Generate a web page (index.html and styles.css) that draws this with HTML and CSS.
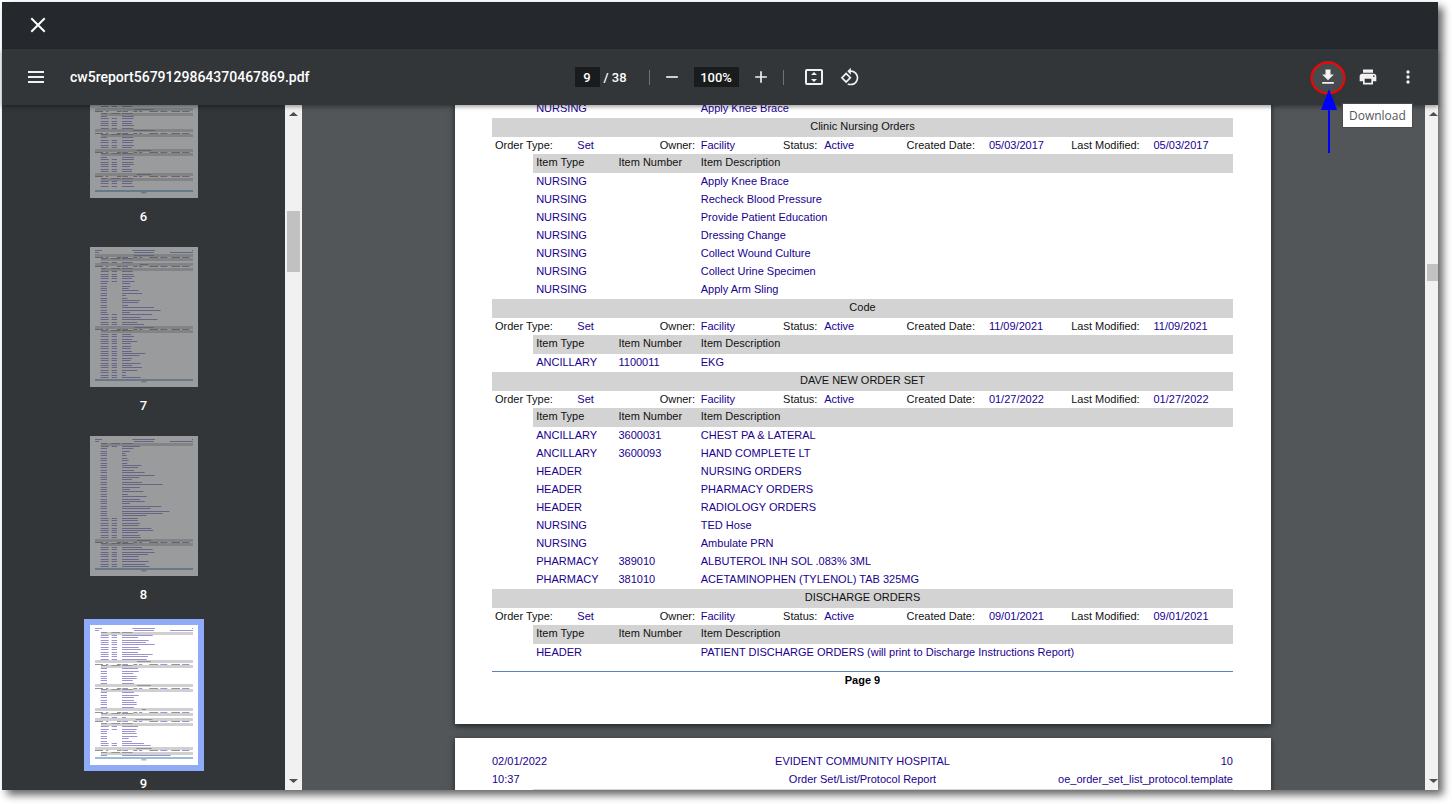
FILE: index.html
```html
<!DOCTYPE html>
<html lang="en">
<head>
    <meta charset="UTF-8">
    <meta name="viewport" content="width=device-width, initial-scale=1.0">
    <title>cw5report5679129864370467869.pdf</title>
    <link rel="stylesheet" href="styles.css">
</head>
<body>
    <div class="window">
        <header class="titlebar">
            <button class="icon-btn" aria-label="Close">
                <svg width="20" height="20" viewBox="0 0 20 20"><path d="M4 4l12 12M16 4L4 16" fill="none" stroke="#fff" stroke-width="2" stroke-linecap="square"/></svg>
            </button>
        </header>

        <div class="toolbar">
            <div class="toolbar-start">
                <button class="icon-btn menu-btn" aria-label="Menu">
                    <svg width="20" height="20" viewBox="0 0 20 20"><path d="M2 4h16v2H2zM2 9h16v2H2zM2 14h16v2H2z"/></svg>
                </button>
                <h1 class="filename">cw5report5679129864370467869.pdf</h1>
            </div>

            <div class="toolbar-center">
                <input class="field page-field" type="text" value="9" aria-label="Page number">
                <span class="page-total">/ 38</span>
                <span class="divider divider-first"></span>
                <button class="icon-btn" aria-label="Zoom out">
                    <svg width="20" height="20" viewBox="0 0 24 24"><path d="M5 11h14v2H5z"/></svg>
                </button>
                <input class="field zoom-field" type="text" value="100%" aria-label="Zoom level">
                <button class="icon-btn" aria-label="Zoom in">
                    <svg width="20" height="20" viewBox="0 0 24 24"><path d="M19 13h-6v6h-2v-6H5v-2h6V5h2v6h6v2z"/></svg>
                </button>
                <span class="divider divider-second"></span>
                <button class="icon-btn fit-btn" aria-label="Fit to page">
                    <svg width="20" height="20" viewBox="0 0 20 20"><rect x="2" y="3" width="16" height="14" rx="1" fill="none" stroke="#f1f1f1" stroke-width="2"/><path d="M10 5l3 3H7zM10 15l3-3H7z"/></svg>
                </button>
                <button class="icon-btn" aria-label="Rotate counterclockwise">
                    <svg width="20" height="20" viewBox="0 0 24 24"><path d="M7.34 6.41L.86 12.9l6.49 6.48 6.49-6.48-6.5-6.49zM3.69 12.9l3.66-3.66L11 12.9l-3.66 3.66-3.65-3.66zm15.67-6.26C17.61 4.88 15.3 4 13 4V.76L8.76 5 13 9.24V6c1.79 0 3.58.68 4.95 2.05 2.73 2.73 2.73 7.17 0 9.9C16.58 19.32 14.79 20 13 20c-.97 0-1.94-.21-2.84-.61l-1.49 1.49C10.02 21.62 11.51 22 13 22c2.3 0 4.61-.88 6.36-2.64 3.52-3.51 3.52-9.21 0-12.72z"/></svg>
                </button>
            </div>

            <div class="toolbar-end">
                <div class="download">
                    <button class="icon-btn hovered" aria-label="Download">
                        <svg width="20" height="20" viewBox="0 0 24 24"><path d="M19 9h-4V3H9v6H5l7 7 7-7zM5 18v2h14v-2H5z"/></svg>
                    </button>
                    <!-- red ring and blue arrow -->
                    <svg class="callout" width="36" height="94" viewBox="0 0 36 94">
                        <ellipse cx="18" cy="17" rx="16.5" ry="15.5" fill="none" stroke="#f00" stroke-width="2"/>
                        <path d="M19 28l8 21H11zM18 48h2v44h-2z" fill="#00f"/>
                    </svg>
                    <span class="tooltip">Download</span>
                </div>
                <button class="icon-btn" aria-label="Print">
                    <svg width="20" height="20" viewBox="0 0 24 24"><path d="M19 8H5c-1.66 0-3 1.34-3 3v6h4v4h12v-4h4v-6c0-1.66-1.34-3-3-3zm-3 11H8v-5h8v5zm3-7c-.55 0-1-.45-1-1s.45-1 1-1 1 .45 1 1-.45 1-1 1zm-1-9H6v4h12V3z"/></svg>
                </button>
                <button class="icon-btn" aria-label="More actions">
                    <svg width="20" height="20" viewBox="0 0 24 24"><circle cx="12" cy="6" r="2"/><circle cx="12" cy="12" r="2"/><circle cx="12" cy="18" r="2"/></svg>
                </button>
            </div>
        </div>

        <div class="content">
            <nav class="sidebar">
                <ol class="thumbs" id="thumbs"></ol>
            </nav>
            <div class="scrollbar">
                <svg class="arrow" width="17" height="17" viewBox="0 0 17 17"><path d="M4 11h9L8.500 7z"/></svg>
                <div class="scroll-thumb side-thumb"></div>
                <svg class="arrow arrow-down" width="17" height="17" viewBox="0 0 17 17"><path d="M4 6h9l-4.500 4z"/></svg>
            </div>

            <main class="viewer">
                <section class="page page-scrolled">
                    <table class="report">
                        <colgroup><col span="18"></colgroup>
                        <tbody>
                            <tr><td></td><td colspan="4">NURSING</td><td colspan="13">Apply Knee Brace</td></tr>
                        </tbody>
                        <tbody>
                            <tr class="set-title"><th colspan="18">Clinic Nursing Orders</th></tr>
                            <tr class="set-info"><th colspan="2">Order Type:</th><td colspan="2">Set</td><th>Owner:</th><td colspan="2">Facility</td><th>Status:</th><td colspan="2">Active</td><th colspan="2">Created Date:</th><td colspan="2">05/03/2017</td><th colspan="2">Last Modified:</th><td colspan="2">05/03/2017</td></tr>
                            <tr class="item-head"><td></td><th colspan="2">Item Type</th><th colspan="2">Item Number</th><th colspan="13">Item Description</th></tr>
                            <tr><td></td><td colspan="2">NURSING</td><td colspan="2"></td><td colspan="13">Apply Knee Brace</td></tr>
                            <tr><td></td><td colspan="2">NURSING</td><td colspan="2"></td><td colspan="13">Recheck Blood Pressure</td></tr>
                            <tr><td></td><td colspan="2">NURSING</td><td colspan="2"></td><td colspan="13">Provide Patient Education</td></tr>
                            <tr><td></td><td colspan="2">NURSING</td><td colspan="2"></td><td colspan="13">Dressing Change</td></tr>
                            <tr><td></td><td colspan="2">NURSING</td><td colspan="2"></td><td colspan="13">Collect Wound Culture</td></tr>
                            <tr><td></td><td colspan="2">NURSING</td><td colspan="2"></td><td colspan="13">Collect Urine Specimen</td></tr>
                            <tr><td></td><td colspan="2">NURSING</td><td colspan="2"></td><td colspan="13">Apply Arm Sling</td></tr>
                        </tbody>
                        <tbody>
                            <tr class="set-title"><th colspan="18">Code</th></tr>
                            <tr class="set-info"><th colspan="2">Order Type:</th><td colspan="2">Set</td><th>Owner:</th><td colspan="2">Facility</td><th>Status:</th><td colspan="2">Active</td><th colspan="2">Created Date:</th><td colspan="2">11/09/2021</td><th colspan="2">Last Modified:</th><td colspan="2">11/09/2021</td></tr>
                            <tr class="item-head"><td></td><th colspan="2">Item Type</th><th colspan="2">Item Number</th><th colspan="13">Item Description</th></tr>
                            <tr><td></td><td colspan="2">ANCILLARY</td><td colspan="2">1100011</td><td colspan="13">EKG</td></tr>
                        </tbody>
                        <tbody>
                            <tr class="set-title"><th colspan="18">DAVE NEW ORDER SET</th></tr>
                            <tr class="set-info"><th colspan="2">Order Type:</th><td colspan="2">Set</td><th>Owner:</th><td colspan="2">Facility</td><th>Status:</th><td colspan="2">Active</td><th colspan="2">Created Date:</th><td colspan="2">01/27/2022</td><th colspan="2">Last Modified:</th><td colspan="2">01/27/2022</td></tr>
                            <tr class="item-head"><td></td><th colspan="2">Item Type</th><th colspan="2">Item Number</th><th colspan="13">Item Description</th></tr>
                            <tr><td></td><td colspan="2">ANCILLARY</td><td colspan="2">3600031</td><td colspan="13">CHEST PA &amp; LATERAL</td></tr>
                            <tr><td></td><td colspan="2">ANCILLARY</td><td colspan="2">3600093</td><td colspan="13">HAND COMPLETE LT</td></tr>
                            <tr><td></td><td colspan="2">HEADER</td><td colspan="2"></td><td colspan="13">NURSING ORDERS</td></tr>
                            <tr><td></td><td colspan="2">HEADER</td><td colspan="2"></td><td colspan="13">PHARMACY ORDERS</td></tr>
                            <tr><td></td><td colspan="2">HEADER</td><td colspan="2"></td><td colspan="13">RADIOLOGY ORDERS</td></tr>
                            <tr><td></td><td colspan="2">NURSING</td><td colspan="2"></td><td colspan="13">TED Hose</td></tr>
                            <tr><td></td><td colspan="2">NURSING</td><td colspan="2"></td><td colspan="13">Ambulate PRN</td></tr>
                            <tr><td></td><td colspan="2">PHARMACY</td><td colspan="2">389010</td><td colspan="13">ALBUTEROL INH SOL .083% 3ML</td></tr>
                            <tr><td></td><td colspan="2">PHARMACY</td><td colspan="2">381010</td><td colspan="13">ACETAMINOPHEN (TYLENOL) TAB 325MG</td></tr>
                        </tbody>
                        <tbody>
                            <tr class="set-title"><th colspan="18">DISCHARGE ORDERS</th></tr>
                            <tr class="set-info"><th colspan="2">Order Type:</th><td colspan="2">Set</td><th>Owner:</th><td colspan="2">Facility</td><th>Status:</th><td colspan="2">Active</td><th colspan="2">Created Date:</th><td colspan="2">09/01/2021</td><th colspan="2">Last Modified:</th><td colspan="2">09/01/2021</td></tr>
                            <tr class="item-head"><td></td><th colspan="2">Item Type</th><th colspan="2">Item Number</th><th colspan="13">Item Description</th></tr>
                            <tr><td></td><td colspan="2">HEADER</td><td colspan="2"></td><td colspan="13">PATIENT DISCHARGE ORDERS (will print to Discharge Instructions Report)</td></tr>
                        </tbody>
                    </table>
                    <footer class="page-footer">Page 9</footer>
                </section>

                <section class="page page-next">
                    <header class="page-header">
                        <span>02/01/2022</span>
                        <span class="mid">EVIDENT COMMUNITY HOSPITAL</span>
                        <span class="end">10</span>
                        <span>10:37</span>
                        <span class="mid">Order Set/List/Protocol Report</span>
                        <span class="end">oe_order_set_list_protocol.template</span>
                    </header>
                    <table class="report">
                        <colgroup><col span="18"></colgroup>
                        <tbody>
                            <tr class="item-head"><td></td><th colspan="17"></th></tr>
                        </tbody>
                    </table>
                </section>
            </main>
            <div class="scrollbar viewer-scrollbar">
                <svg class="arrow" width="17" height="17" viewBox="0 0 17 17"><path d="M4 11h9L8.500 7z"/></svg>
                <div class="scroll-thumb main-thumb"></div>
                <svg class="arrow arrow-down" width="17" height="17" viewBox="0 0 17 17"><path d="M4 6h9l-4.500 4z"/></svg>
            </div>
        </div>
    </div>

    <script src="thumbs.js"></script>
</body>
</html>
```

FILE: styles.css
```css
* {
    box-sizing: border-box;
}

body {
    margin: 0;
    height: 100vh;
    padding: 2px 14px 14px 2px;
    background: #fff;
    font-family: Roboto, Arial, sans-serif;
    overflow: hidden;
}

.window {
    display: flex;
    flex-direction: column;
    height: 100%;
    background: #525659;
    box-shadow: 5px 5px 8px rgba(0, 0, 0, 0.6);
}

/* top bars */
.titlebar {
    display: flex;
    align-items: center;
    flex: 0 0 47px;
    padding: 0 20px 2px;
    background: #25282c;
}

.toolbar {
    display: flex;
    align-items: center;
    flex: 0 0 56px;
    padding: 0 14px;
    background: #323639;
    color: #fff;
    box-shadow: 0 2px 4px rgba(0, 0, 0, 0.35);
    position: relative;
    z-index: 2;
}

.toolbar-start,
.toolbar-end {
    display: flex;
    align-items: center;
    flex: 1 1 0;
}

.toolbar-end {
    justify-content: flex-end;
    gap: 8px;
}

.toolbar-center {
    display: flex;
    align-items: center;
}

.icon-btn {
    display: flex;
    align-items: center;
    justify-content: center;
    width: 32px;
    height: 32px;
    padding: 0;
    border: none;
    border-radius: 50%;
    background: none;
    cursor: pointer;
}

.icon-btn svg {
    fill: #f1f1f1;
}

.hovered {
    background: #474b4d;
}

.menu-btn {
    margin-left: 4px;
}

.fit-btn {
    margin-right: 4px;
}

.filename {
    margin: 0 0 0 18px;
    font-size: 14px;
    font-weight: 500;
    line-height: 20px;
}

.field {
    height: 20px;
    padding: 0;
    border: none;
    background: #191b1c;
    color: #fff;
    font-family: inherit;
    font-size: 13px;
    font-weight: 500;
    text-align: center;
}

.page-field {
    width: 25px;
}

.zoom-field {
    width: 45px;
    margin: 0 6px;
}

.page-total {
    width: 25px;
    margin-left: 4px;
    font-size: 13px;
    font-weight: 500;
    white-space: nowrap;
}

.divider {
    width: 1px;
    height: 15px;
    background: #6f7274;
}

.divider-first {
    margin: 0 6px 0 20px;
}

.divider-second {
    margin: 0 14px 0 6px;
}

.download {
    position: relative;
}

.callout {
    position: absolute;
    left: -2px;
    top: 0;
    pointer-events: none;
}

.tooltip {
    position: absolute;
    left: 30px;
    top: 42px;
    padding: 0 6px;
    border: 1px solid #4a4a4a;
    background: #fff;
    color: #575757;
    font-family: "Open Sans", "Noto Sans", sans-serif;
    font-size: 12px;
    line-height: 23px;
}

/* thumbnails */
.content {
    display: flex;
    flex: 1;
    min-height: 0;
    overflow: hidden;
}

.sidebar {
    flex: 0 0 283px;
    background: #323639;
    overflow: hidden;
}

.thumbs {
    display: flex;
    flex-direction: column;
    align-items: center;
    margin: -47px 0 0;
    padding: 0;
    list-style: none;
}

.thumbs li {
    display: flex;
    flex-direction: column;
    align-items: center;
    height: 189px;
    color: #fff;
    font-size: 13px;
    font-weight: 500;
    line-height: 37px;
}

.thumb {
    display: block;
    padding: 0;
    border: none;
    background: #fff;
    opacity: 0.5;
}

.thumb svg {
    display: block;
    width: 108px;
    height: 140px;
}

.thumb.selected {
    opacity: 1;
    box-shadow: 0 0 0 6px #8fabf7;
}

/* scrollbars */
.scrollbar {
    display: flex;
    flex-direction: column;
    flex: 0 0 17px;
    background: #f1f1f1;
}

.viewer-scrollbar {
    margin-right: -4px;
}

.arrow {
    fill: #505050;
}

.arrow-down {
    margin-top: auto;
}

.scroll-thumb {
    margin: 0 2px;
    background: #c1c1c1;
}

.side-thumb {
    margin-top: 89px;
    height: 61px;
}

.main-thumb {
    margin-top: 142px;
    height: 17px;
}

/* document */
.viewer {
    flex: 1;
    min-width: 0;
    padding-right: 1px;
    overflow: hidden;
}

.page {
    width: 816px;
    margin: 0 auto 14px;
    padding: 0 38px 0 37px;
    background: #fff;
    color: #200090;
    font-family: "Liberation Sans", Arial, sans-serif;
    font-size: 11px;
    line-height: 16px;
    box-shadow: 0 2px 6px rgba(0, 0, 0, 0.6);
}

.page-scrolled {
    margin-top: -5px;
    padding-bottom: 36px;
}

.page-next {
    padding-top: 14px;
}

.report {
    width: 100%;
    table-layout: fixed;
    border-collapse: collapse;
}

.report tr {
    height: 18px;
}

.report td,
.report th {
    padding: 0 0 0 3px;
    font-weight: normal;
    text-align: left;
    vertical-align: top;
    white-space: nowrap;
}

.report th {
    color: #111;
}

.report .set-title,
.report .item-head {
    height: 19px;
}

.report .set-info {
    height: 17px;
}

.report .set-title th {
    padding: 0;
    background: #d3d3d3;
    text-align: center;
}

.item-head th {
    background: #d3d3d3;
}

.page-footer {
    margin-top: 9px;
    border-top: 1px solid #5b83bd;
    color: #000;
    font-weight: bold;
    text-align: center;
}

.page-header {
    display: grid;
    grid-template-columns: 1fr 1fr 1fr;
    margin-bottom: 1px;
    line-height: 18px;
}

.mid {
    text-align: center;
}

.end {
    text-align: right;
}
```

FILE: thumbs.js
```javascript
// Each page is a list of rows: [kind, y, width]
// h = page header, t = set title, o = set info, c = column heads,
// n = item with a number, i = item without one, f = footer
const pages = [
    { number: 6, rows: 'n145,30 t150,58 o160 c165 i175,36 n181,34 n190,30 n196,30 n202,36 n211,34 t213,66 o226 c228 i238,34 n247,36 n253,32 n262,36 n268,30 t273,42 o283 c285 i298,36 n304,36 n313,34 n319,36 n325,24 n334,30 n340,30 t345,42 o355 c360 n370,32 n376,30 n385,36 f396' },
    { number: 7, rows: 'h10 t21,60 o31 c33 n46,32 t48,24 o58 c63 n73,32 n82,34 n88,38 n94,30 n103,38 i109,24 i118,26 i124,20 i130,50 i139,60 i145,12 i154,16 i160,54 i166,50 i175,18 i181,96 i190,116 i196,24 n202,90 n211,56 n217,106 n226,46 n232,66 t237,58 o247 c249 n262,28 n268,36 n277,30 n283,46 n289,26 n298,28 n304,26 n313,30 n319,70 n325,52 n334,30 n340,26 n349,56 n355,30 n361,60 n370,46 n376,12 n385,12 n391,56 f396' },
    { number: 8, rows: 'h10 c21 n31,54 i37,34 i46,24 i52,10 i58,14 i67,16 i73,20 i82,16 i88,58 i94,48 i103,36 i109,68 i118,98 i124,52 i130,30 i139,60 i145,122 i154,54 i160,24 i166,64 i175,18 i181,74 i190,54 i196,68 i202,24 i211,118 i217,86 i226,142 i232,122 i238,74 n247,48 n253,48 n262,54 n268,50 n277,88 n283,94 n289,48 n298,54 n304,56 t309,42 o319 c321 n334,60 n340,92 n349,98 n355,78 n361,50 n370,50 n376,80 n385,70 n391,82 f396' },
    { number: 9, selected: true, rows: 'h10 c21 n31,92 n37,48 n46,80 n52,72 n58,98 n67,50 n73,56 n82,48 n88,92 n94,78 n103,74 t105,42 o118 c120 i130,48 i139,50 i145,34 i154,44 i160,44 i166,32 i175,36 t177,42 o190 c192 i202,36 i211,50 i217,36 i226,36 i232,44 i238,44 i247,36 t249,12 o262 c264 n277,12 t279,50 o289 c294 n304,48 n313,44 i319,40 i325,44 i334,46 i340,20 i349,30 n355,66 n361,86 t366,47 o376 c381 i391,146 f396' }
];

const blue = '#9c94d0';
const gray = '#949494';

function bar(x, y, width, color, height = 3) {
    return `<rect x="${x}" y="${y}" width="${width}" height="${height}" fill="${color}"/>`;
}

function drawRow(row) {
    const kind = row[0];
    const [y, width] = row.slice(1).split(',').map(Number);
    const top = y - 1;

    if (kind === 'h') {
        return bar(15, top, 21, blue) + bar(127, top, 68, blue) + bar(306, top, 3, blue) +
            bar(15, top + 6, 12, blue) + bar(132, top + 6, 60, blue) + bar(240, top + 6, 69, blue);
    }
    if (kind === 't') {
        return bar(15, y, 294, '#d0d0d0', 9) + bar(162 - width / 2, y + 3, width, gray);
    }
    if (kind === 'o') {
        return bar(15, top, 24, gray) + bar(48, top, 7, blue) + bar(81, top, 13, gray) +
            bar(97, top, 17, blue) + bar(130, top, 12, gray) + bar(147, top, 10, blue) +
            bar(178, top, 26, gray) + bar(211, top, 21, blue) + bar(244, top, 26, gray) +
            bar(276, top, 22, blue);
    }
    if (kind === 'c') {
        return bar(33, y, 276, '#d0d0d0', 9) + bar(33, y, 18, gray) +
            bar(64, y, 26, gray) + bar(96, y, 32, gray);
    }
    if (kind === 'f') {
        return bar(15, y, 294, '#9bbcd6', 6) + bar(154, y + 7, 15, gray);
    }
    return bar(32, top, kind === 'n' ? 24 : 19, blue) +
        (kind === 'n' ? bar(65, top, 16, blue) : '') + bar(96, top, width, blue);
}

document.getElementById('thumbs').innerHTML = pages.map(page => `
    <li>
        <button class="thumb${page.selected ? ' selected' : ''}" aria-label="Page ${page.number}">
            <svg viewBox="0 0 324 420">${page.rows.split(' ').map(drawRow).join('')}</svg>
        </button>
        <span>${page.number}</span>
    </li>`).join('');
```
